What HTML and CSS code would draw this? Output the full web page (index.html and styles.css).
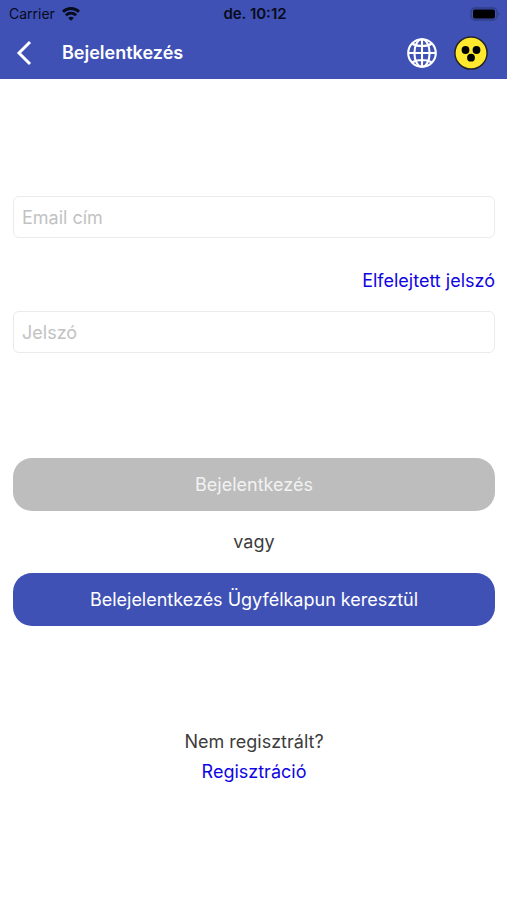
FILE: index.html
```html
<!DOCTYPE html>
<html lang="hu">
<head>
  <meta charset="utf-8">
  <meta name="viewport" content="width=device-width, initial-scale=1">
  <title>Bejelentkezés</title>
  <link rel="stylesheet" href="styles.css">
</head>
<body>
  <header class="header">
    <div class="status">
      <div class="carrier">
        <span>Carrier</span>
        <svg width="18" height="14" viewBox="0 0 18 14" fill="none" stroke="#080b1c" stroke-width="2.8" aria-hidden="true">
          <path d="M1 4.8a11.4 11.4 0 0 1 16 0M3.9 8.3a7.3 7.3 0 0 1 10.2 0"/>
          <path d="M9 13.8 6.2 11a4 4 0 0 1 5.6 0z" fill="#080b1c" stroke="none"/>
        </svg>
      </div>
      <time class="clock">de. 10:12</time>
      <svg class="battery" width="31" height="14" viewBox="0 0 31 14" aria-hidden="true">
        <rect x="1" y="1" width="26" height="12" rx="4" fill="none" stroke="#303e88" stroke-width="1.3"/>
        <rect x="3" y="2.6" width="22" height="8.8" rx="2" fill="#000"/>
        <path d="M28.5 5a2.4 2.4 0 0 1 0 4z" fill="#303e88"/>
      </svg>
    </div>
    <nav class="nav">
      <button class="icon-button back" type="button" aria-label="Vissza">
        <svg width="16" height="26" viewBox="0 0 16 26" fill="none" stroke="#fff" stroke-width="3">
          <path d="M14 2 3 13l11 11"/>
        </svg>
      </button>
      <h1 class="title">Bejelentkezés</h1>
      <button class="icon-button" type="button" aria-label="Nyelv">
        <svg width="32" height="32" viewBox="0 0 32 32" fill="none" stroke="#fff" stroke-width="2.1">
          <circle cx="16" cy="16" r="13.8"/>
          <ellipse cx="16" cy="16" rx="7.6" ry="13.8"/>
          <path d="M16 2v28M2 16h28M6 6.5c5 3.3 15 3.3 20 0M6 25.5c5-3.3 15-3.3 20 0"/>
        </svg>
      </button>
      <button class="icon-button" type="button" aria-label="Akadálymentes nézet">
        <svg width="34" height="34" viewBox="0 0 34 34">
          <circle cx="17" cy="17" r="16.1" fill="#ffe82e" stroke="#24252b" stroke-width="1.5"/>
          <g fill="#000"><circle cx="11.5" cy="14" r="3.9"/><circle cx="22.5" cy="14" r="3.9"/><circle cx="17" cy="21.7" r="3.9"/></g>
        </svg>
      </button>
    </nav>
  </header>
  <main class="main">
    <form class="form">
      <input class="field" type="email" placeholder="Email cím" aria-label="Email cím">
      <a class="link forgot" href="#jelszo">Elfelejtett jelszó</a>
      <input class="field" type="password" placeholder="Jelszó" aria-label="Jelszó">
      <div class="actions">
        <button class="button" type="submit" disabled>Bejelentkezés</button>
        <p class="text">vagy</p>
        <button class="button" type="button">Belejelentkezés Ügyfélkapun keresztül</button>
      </div>
    </form>
    <div class="register">
      <p class="text">Nem regisztrált?</p>
      <a class="link" href="#regisztracio">Regisztráció</a>
    </div>
  </main>
</body>
</html>
```
FILE: styles.css
```css
* {
  box-sizing: border-box;
}

body {
  margin: 0;
  background: #fff;
  color: #3c3c3c;
  font: 18px/30px Inter, "Liberation Sans", sans-serif;
}

.header {
  background: #3f51b5;
}

.status {
  display: grid;
  grid-template-columns: 1fr auto 1fr;
  align-items: center;
  height: 26px;
  padding: 0 6px 0 9px;
  color: #080b1c;
  font-size: 14px;
  line-height: 28px;
}

.carrier {
  display: flex;
  align-items: center;
  gap: 7px;
}

.clock {
  font-size: 15px;
  font-weight: 600;
}

.battery {
  justify-self: end;
}

.nav {
  display: flex;
  align-items: center;
  gap: 16px;
  height: 53px;
  padding: 0 19px 0 16px;
}

.icon-button {
  display: flex;
  padding: 0;
  border: 0;
  background: none;
}

.back {
  width: 30px;
}

.title {
  flex: 1;
  margin: 0;
  color: #fff;
  font-size: 18px;
  font-weight: 600;
}

.main {
  padding: 117px 12px 0 13px;
}

.form {
  display: flex;
  flex-direction: column;
}

.field {
  width: 100%;
  height: 42px;
  padding: 0 8px;
  border: 1px solid #ebebeb;
  border-radius: 6px;
  background: #fff;
  color: #3c3c3c;
  font: inherit;
}

.field::placeholder {
  color: #c2c2c2;
}

.link {
  color: #1005e2;
  text-decoration: none;
}

.forgot {
  align-self: flex-end;
  margin: 28px 0 15px;
}

.actions {
  display: flex;
  flex-direction: column;
  gap: 16px;
  margin-top: 105px;
}

.button {
  width: 100%;
  height: 53px;
  padding: 0;
  border: 0;
  border-radius: 19px;
  background: #3f51b5;
  color: #fff;
  font: inherit;
}

.button:disabled {
  background: #bdbdbd;
  color: #f2f2f2;
}

.text {
  margin: 0;
  text-align: center;
}

.register {
  display: flex;
  flex-direction: column;
  align-items: center;
  margin-top: 101px;
}
```
